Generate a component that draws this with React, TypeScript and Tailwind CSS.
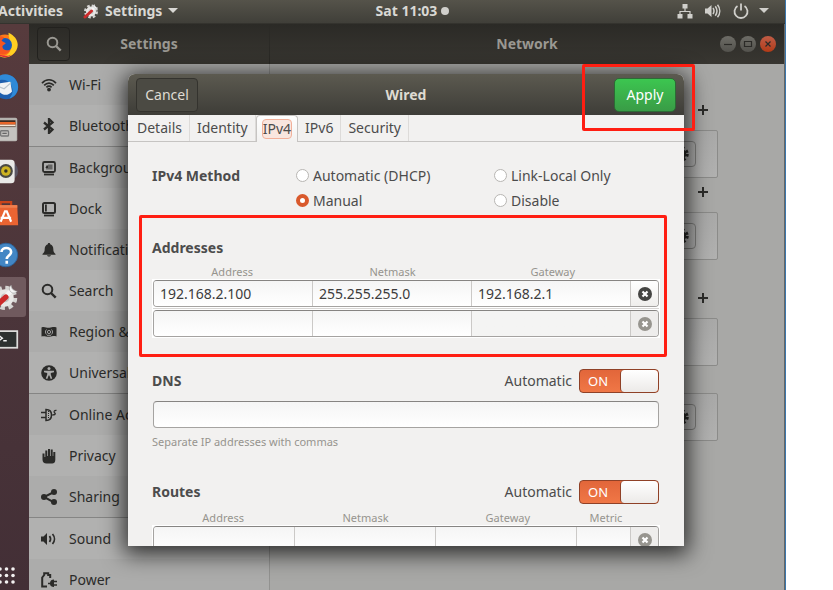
import { type ReactNode } from "react";

type IconName =
  | "wifi" | "bluetooth" | "background" | "dock" | "bell" | "search" | "flag"
  | "access" | "plug" | "hand" | "share" | "sound" | "power";

const glyphs: Record<IconName, ReactNode> = {
  wifi: (
    <g fill="none" stroke="currentColor" strokeWidth="1.7">
      <path d="M1 6.2C5 1.6 11 1.6 15 6.2" />
      <path d="M3.2 8.4c2.8-3 6.8-3 9.6 0" />
      <path d="M5.4 10.4c1.5-1.6 3.7-1.6 5.2 0" />
      <circle cx="8" cy="12.6" r="1.9" fill="currentColor" stroke="none" />
    </g>
  ),
  bluetooth: <path d="M3 4.500l8.500 7L8 15V1l3.500 3.500-8.500 7" fill="none" stroke="currentColor" strokeWidth="2.300" />,
  background: (
    <g>
      <rect x="2" y="2" width="12" height="10" rx="1.5" fill="none" stroke="currentColor" strokeWidth="1.8" />
      <path d="M5 9.500V7h2V4.500h4.500v5z" opacity=".55" fill="currentColor" />
      <path d="M4.500 8l1-2.500h1.500V8z" fill="currentColor" />
      <rect x="3" y="13.600" width="10" height="1.800" fill="currentColor" />
    </g>
  ),
  dock: (
    <g>
      <rect x="2" y="2" width="12" height="10" rx="1.500" fill="none" stroke="currentColor" strokeWidth="2" />
      <rect x="4" y="3.500" width="1.800" height="7" fill="currentColor" />
      <rect x="3" y="13.600" width="10" height="1.800" fill="currentColor" />
    </g>
  ),
  bell: (
    <path
      d="M8 1c.8 0 1.200.6 1.200 1.200C11.500 3 12.300 5 12.300 7c0 2.500.7 3.500 2.200 5v.8h-13V12c1.500-1.500 2.200-2.500 2.200-5 0-2 .8-4 3.100-4.800C6.800 1.600 7.200 1 8 1zM6 13.300h4C9.500 15 6.500 15 6 13.300z"
      fill="currentColor"
    />
  ),
  search: (
    <g fill="none" stroke="currentColor" strokeWidth="2">
      <circle cx="6.500" cy="6.500" r="4.800" />
      <path d="M10 10l4.700 4.700" strokeWidth="2.400" />
    </g>
  ),
  flag: (
    <g>
      <path d="M.5 3.500c3-1.500 5 .8 8 .3 2.500-.4 4-1.300 7-.3v9c-3-1-4.500 0-7 .3-3 .4-5-1.300-8-.3z" fill="currentColor" />
      <g fill="none" stroke="#aaa" strokeWidth=".9">
        <circle cx="8" cy="8" r="1.600" />
        <path d="M5.500 5.500c-1.500 1.500-1.300 3.500 0 5M10.500 5.500c1.500 1.500 1.300 3.500 0 5M6 11.300h4" />
      </g>
    </g>
  ),
  access: (
    <g>
      <circle cx="8" cy="8" r="7.800" fill="currentColor" />
      <circle cx="8" cy="3.600" r="1.500" fill="#adadac" />
      <path d="M3 5.800h10v1.400l-3.200.8v1.500l1.400 4-1.500.5L8.400 10.500h-.8L6.300 14l-1.500-.5 1.400-4V8L3 7.200z" fill="#adadac" />
    </g>
  ),
  plug: (
    <g fill="none" stroke="currentColor" strokeWidth="1.500">
      <path d="M5 2.500c3.500 0 5.500 2 5.500 5.500s-2 5.500-5.500 5.500zM0 5.500h5M0 10.500h5" />
      <path d="M7.500 4v8" strokeDasharray="1 1" strokeWidth="1" />
      <path d="M10.500 8h1c2-.2 3.700-.8 2.300-2-1.500-1.200-.8-2.800 1.700-2.600" strokeWidth="1.200" />
    </g>
  ),
  hand: (
    <path
      d="M1.500 5.500h2V9h.8V2.500h2V8h.7V1h2v7h.7V1.500h2V8h.6V4h2v8c0 2.500-1.500 3.500-3 3.500H5.500c-2.500 0-4-1.500-4-4z"
      fill="currentColor"
    />
  ),
  share: (
    <g fill="currentColor">
      <path d="M13 3L3 8l10 5.300" fill="none" stroke="currentColor" strokeWidth="2" />
      <circle cx="3" cy="8" r="3" />
      <circle cx="13" cy="3" r="3" />
      <circle cx="13" cy="13" r="3" />
    </g>
  ),
  sound: (
    <g>
      <path d="M0 5.500h2.500L6 2v12l-3.500-3.500H0z" fill="currentColor" />
      <path d="M8.500 5c1.300 1.800 1.300 4.200 0 6M11.500 3c2.600 3 2.600 7 0 10" fill="none" stroke="currentColor" strokeWidth="1.700" />
    </g>
  ),
  power: (
    <g>
      <path d="M6 14.600H1.200V5.500l2-2.500V1.200h4V3h2v3" fill="none" stroke="currentColor" strokeWidth="2" />
      <path d="M7 10.700h2c.4-2 1.600-3.200 4-3.200v1.300h3v1.500h-3v1.900h3v1.500h-3V15c-2.400 0-3.600-1-4-2.800H7z" fill="currentColor" />
    </g>
  ),
};

function Glyph({ name, className = "size-4" }: { name: IconName; className?: string }) {
  return (
    <svg viewBox="0 0 16 16" className={`shrink-0 ${className}`} aria-hidden="true">
      {glyphs[name]}
    </svg>
  );
}

function ToolsIcon({ className }: { className: string }) {
  return (
    <svg viewBox="0 0 32 32" className={className} aria-hidden="true">
      <circle cx="16" cy="17" r="11.500" fill="none" stroke="#d6d5d3" strokeWidth="5" strokeDasharray="5 4.030" />
      <circle cx="16" cy="17" r="10" fill="#e8e7e5" />
      <circle cx="16" cy="17" r="5" fill="#c4c2bf" />
      <path d="M14 18L25 7" stroke="#f5f5f5" strokeWidth="5" />
      <path d="M23 2.500a5 5 0 1 0 7 7l-4-1-2-2z" fill="#f5f5f5" stroke="#999" strokeWidth=".6" />
      <path d="M4 28L17 16" stroke="#cc2a2a" strokeWidth="6" strokeLinecap="round" />
    </svg>
  );
}

function Firefox() {
  return (
    <svg viewBox="0 0 32 32" className="size-7" aria-hidden="true">
      <circle cx="16" cy="17" r="13" fill="#ff7a18" />
      <path d="M20 2c9 4 13 12 9 20-4 7-12 10-19 7 9 0 13-5 13-12 0-5-3-8-3-15z" fill="#ffcf22" />
      <circle cx="16" cy="16" r="8" fill="#1858ba" />
      <path d="M3 9c3-3 7-4 12-2l-3 4 5 3-4 3c0 5 5 6 9 4-2 5-8 7-13 5C3 23 1 15 3 9z" fill="#f7561f" />
      <path d="M4 22c4 6 12 8 19 5-4 4-13 5-19-5z" fill="#e2243d" />
    </svg>
  );
}

function Thunderbird() {
  return (
    <svg viewBox="0 0 32 32" className="size-7" aria-hidden="true">
      <circle cx="17" cy="16" r="14" fill="#1f5fae" />
      <path d="M10 3c9-5 21 2 21 13 0 7-5 12-10 13 4-5 5-9 2-15-3-5-7-7-13-6z" fill="#2f8ad8" />
      <path d="M3 13l19-3 2 11c-4 5-10 5-14 1-4-1-7-5-7-9z" fill="#f1f3f5" />
      <path d="M5 14l10 4 8-7" fill="none" stroke="#b9c3cc" strokeWidth="1.300" />
    </svg>
  );
}

function Files() {
  return (
    <svg viewBox="0 0 32 32" className="size-7" aria-hidden="true">
      <rect x="1" y="3" width="29" height="27" rx="2" fill="#b4b2ae" />
      <rect x="3" y="6" width="25" height="8" fill="#3c2a20" />
      <path d="M3 8h25v3H3z" fill="#e8662a" />
      <path d="M3 11h25v2H3z" fill="#f7e6d6" />
      <rect x="2" y="14" width="27" height="15" fill="#c5c3c0" />
      <rect x="11" y="18" width="9" height="6" rx="1" fill="none" stroke="#777" strokeWidth="1.500" />
      <path d="M13 21h5" stroke="#666" strokeWidth="1.500" />
    </svg>
  );
}

function Rhythmbox() {
  return (
    <svg viewBox="0 0 32 32" className="size-7" aria-hidden="true">
      <circle cx="20" cy="16" r="11" fill="#5b5664" />
      <rect x="2" y="3" width="25" height="27" rx="4" fill="#e9e9e7" />
      <circle cx="17" cy="16" r="8" fill="#4a4a44" />
      <circle cx="17" cy="16" r="5.500" fill="#cdb322" />
      <circle cx="17" cy="16" r="2" fill="#33332a" />
    </svg>
  );
}

function Software() {
  return (
    <svg viewBox="0 0 32 32" className="size-7" aria-hidden="true">
      <path d="M11 9V3.500h12V9" fill="none" stroke="#c9441b" strokeWidth="2.500" />
      <path d="M1 7h29l1 23H0z" fill="#ea6432" />
      <path d="M1 7h29v3H1z" fill="#f08050" />
      <path d="M11 26l5-12h2l5 12M11 21.500h12" fill="none" stroke="#fff" strokeWidth="2.500" />
    </svg>
  );
}

function Help() {
  return (
    <svg viewBox="0 0 32 32" className="size-7" aria-hidden="true">
      <circle cx="17" cy="16" r="13.500" fill="#4286c4" stroke="#2b639b" />
      <path d="M12 12.500c0-6 11-6 11 0 0 4-5 4-5 8M18 22.500v3.500" fill="none" stroke="#fff" strokeWidth="3" />
    </svg>
  );
}

function Terminal() {
  return (
    <svg viewBox="0 0 32 32" className="size-7" aria-hidden="true">
      <rect x="0" y="6" width="31" height="21" fill="#dcdcda" />
      <rect x="2" y="8" width="27" height="17" fill="#2d3130" />
      <path d="M9 12l4 3-4 3M14 18h4" fill="none" stroke="#f4f4f4" strokeWidth="1.600" />
    </svg>
  );
}

const dockApps = [
  { name: "Firefox", icon: <Firefox />, active: false },
  { name: "Thunderbird", icon: <Thunderbird />, active: false },
  { name: "Files", icon: <Files />, active: false },
  { name: "Rhythmbox", icon: <Rhythmbox />, active: false },
  { name: "Software", icon: <Software />, active: false },
  { name: "Help", icon: <Help />, active: false },
  { name: "Settings", icon: <ToolsIcon className="size-7" />, active: true },
  { name: "Terminal", icon: <Terminal />, active: false },
];

function Dock() {
  return (
    <nav aria-label="Dock" className="flex w-[29px] shrink-0 flex-col items-end overflow-hidden bg-linear-to-b from-[#573b3d] via-[#4b353a] to-[#432f36] pt-px">
      {dockApps.map((app) => (
        <button
          key={app.name}
          aria-label={app.name}
          className={`mr-[3px] mb-0.5 flex h-10 w-11 shrink-0 items-center justify-end rounded-[3px] pr-[7px] ${app.active ? "bg-[#705a5e]" : ""}`}
        >
          {app.icon}
        </button>
      ))}
      <button aria-label="Show Applications" className="mt-auto mr-3.5 mb-1.5">
        <svg viewBox="0 0 17 17" className="size-[17px]" fill="#f3f1f1" aria-hidden="true">
          {[2, 8.5, 15].map((y) => [2, 8.5, 15].map((x) => <circle key={`${x}-${y}`} cx={x} cy={y} r="1.8" />))}
        </svg>
      </button>
    </nav>
  );
}

function TopBar() {
  return (
    <header className="grid h-6 shrink-0 grid-cols-[1fr_auto_1fr] items-center border-b border-[#34332e] bg-linear-to-b from-[#55534a] to-[#403f39] pb-0.5 text-sm leading-5 font-bold text-[#d9d8d4]">
      <div className="flex items-center gap-5">
        <button className="-ml-0.5">Activities</button>
        <button className="flex items-center gap-1.5">
          <ToolsIcon className="size-4" />
          Settings
          <Caret />
        </button>
      </div>
      <button className="flex items-center gap-1 pl-10">
        Sat 11:03
        <span className="size-2 rounded-full bg-[#d0cfcb]" />
      </button>
      <div className="flex items-center justify-end gap-3 pr-4 text-[#d0cfcb]">
        <svg viewBox="0 0 16 16" className="size-4" fill="currentColor" aria-hidden="true">
          <path d="M5.500 1h5v4.500h-5zM.5 11h5v4.500h-5zM10.500 11h5v4.500h-5z" />
          <path d="M8 5v3.500M3 11V8.500h10V11" fill="none" stroke="currentColor" strokeWidth="1.200" />
        </svg>
        <svg viewBox="0 0 16 16" className="size-4" aria-hidden="true">
          <path d="M0 5.500h2.500L6.500 2v12l-4-3.500H0z" fill="currentColor" />
          <path d="M8 5c1.200 1.800 1.200 4.200 0 6M10.300 3.300c2 2.800 2 6.600 0 9.400M12.500 1.800c3 3.700 3 8.700 0 12.400" fill="none" stroke="currentColor" strokeWidth="1.500" />
        </svg>
        <button aria-label="System menu" className="flex items-center gap-2.5">
          <svg viewBox="0 0 16 16" className="size-4" fill="none" stroke="currentColor" strokeWidth="1.800" aria-hidden="true">
            <path d="M4.500 3a6.500 6.500 0 1 0 7 0M8 .5v7" />
          </svg>
          <Caret />
        </button>
      </div>
    </header>
  );
}

function Caret() {
  return (
    <svg viewBox="0 0 10 5" className="h-[5px] w-2.5" fill="currentColor" aria-hidden="true">
      <path d="M0 0h10L5 5z" />
    </svg>
  );
}

const sections: { label: string; icon: IconName; divider?: boolean }[] = [
  { label: "Wi-Fi", icon: "wifi" },
  { label: "Bluetooth", icon: "bluetooth", divider: true },
  { label: "Background", icon: "background" },
  { label: "Dock", icon: "dock" },
  { label: "Notifications", icon: "bell" },
  { label: "Search", icon: "search" },
  { label: "Region & Language", icon: "flag" },
  { label: "Universal Access", icon: "access", divider: true },
  { label: "Online Accounts", icon: "plug" },
  { label: "Privacy", icon: "hand" },
  { label: "Sharing", icon: "share", divider: true },
  { label: "Sound", icon: "sound" },
  { label: "Power", icon: "power" },
];

function Sidebar() {
  return (
    <ul className="w-[241px] shrink-0 overflow-hidden border-r border-[#929290]">
      {sections.map((s) => (
        <li key={s.label} className={`odd:bg-[#acacab] even:bg-[#b1b1b0] ${s.divider ? "border-b border-[#858584]" : ""}`}>
          <button className="flex h-[41px] w-full items-center gap-3 pl-3 text-left text-[#2b2b29]">
            <Glyph name={s.icon} />
            {s.label}
          </button>
        </li>
      ))}
    </ul>
  );
}

function AddButton() {
  return (
    <button aria-label="Add" className="mr-2 flex h-5 w-3.5 items-center text-[#2b2b29]">
      <svg viewBox="0 0 14 14" className="size-3.5" stroke="currentColor" strokeWidth="2" aria-hidden="true">
        <path d="M7 2v10M2 7h10" />
      </svg>
    </button>
  );
}

function DeviceCard({ gear = true }: { gear?: boolean }) {
  return (
    <div className="flex h-12 w-full items-center justify-end rounded-xs border border-[#8b8b89] bg-linear-to-b from-[#a9a9a8] to-[#b1b1b0] pr-[21px]">
      {gear && (
        <button aria-label="Options" className="flex h-[26px] w-[30px] items-center justify-center rounded-[4px] border border-[#7c7c7a] text-[#2b2b29]">
          <svg viewBox="0 0 16 16" className="size-4" aria-hidden="true">
            <circle cx="8" cy="8" r="6" fill="none" stroke="currentColor" strokeWidth="3.500" strokeDasharray="2.500 2.210" />
            <circle cx="8" cy="8" r="4" fill="none" stroke="currentColor" strokeWidth="2.500" />
          </svg>
        </button>
      )}
    </div>
  );
}

function NetworkPane() {
  return (
    <main className="flex flex-1 flex-col items-end bg-[#a8a8a6] px-[66px] pt-9">
      <AddButton />
      <div className="mt-2.5 w-full"><DeviceCard /></div>
      <div className="mt-1"><AddButton /></div>
      <div className="mt-2.5 w-full"><DeviceCard /></div>
      <div className="mt-7"><AddButton /></div>
      <div className="mt-2.5 w-full"><DeviceCard gear={false} /></div>
      <div className="mt-[27px] w-full"><DeviceCard /></div>
    </main>
  );
}

function WindowButton({ label, close, children }: { label: string; close?: boolean; children: ReactNode }) {
  return (
    <button
      aria-label={label}
      className={`flex size-4 items-center justify-center rounded-full text-[#2b2a27] ${close ? "bg-linear-to-b from-[#c05c45] to-[#b23a15]" : "bg-linear-to-b from-[#6d6c66] to-[#53524d]"}`}
    >
      <svg viewBox="0 0 16 16" className="size-4" fill="none" stroke="currentColor" strokeWidth="1.200" aria-hidden="true">
        {children}
      </svg>
    </button>
  );
}

function WindowHeader() {
  return (
    <header className="flex h-10 shrink-0 bg-linear-to-b from-[#2b2a26] to-[#383631] font-bold text-[#9a9892]">
      <div className="grid w-[241px] shrink-0 grid-cols-[1fr_auto_1fr] items-center border-r border-[#2b2a26] px-2">
        <button aria-label="Search" className="flex h-[34px] w-[33px] items-center justify-center rounded-[4px] border border-[#22211e]">
          <Glyph name="search" />
        </button>
        <h1>Settings</h1>
      </div>
      <div className="grid flex-1 grid-cols-[1fr_auto_1fr] items-center px-2">
        <h2 className="col-start-2">Network</h2>
        <div className="flex justify-end gap-1">
          <WindowButton label="Minimize"><path d="M4 8.500h8" /></WindowButton>
          <WindowButton label="Maximize"><path d="M4.500 5.500h7v5h-7z" /></WindowButton>
          <WindowButton label="Close" close><path d="M5.500 5.500l5 5M10.500 5.500l-5 5" /></WindowButton>
        </div>
      </div>
    </header>
  );
}

const tabs = ["Details", "Identity", "IPv4", "IPv6", "Security"];

function Tabs() {
  return (
    <div role="tablist" className="flex h-[27px] shrink-0 border-b border-[#c6c4c2] pl-0.5">
      {tabs.map((tab) =>
        tab === "IPv4" ? (
          <button
            key={tab}
            role="tab"
            aria-selected="true"
            className="-mb-px flex items-center rounded-t-[4px] border border-b-0 border-[#c6c4c2] bg-linear-to-b from-white to-[#f2f1f0] px-1.5"
          >
            <span className="-mx-px rounded-[4px] border border-[#f2b09a] bg-[#f9e6df] leading-[18px]">{tab}</span>
          </button>
        ) : (
          <button key={tab} role="tab" aria-selected="false" className="border-r border-[#dddbd9] px-[7px]">
            {tab}
          </button>
        ),
      )}
    </div>
  );
}

function Method({ label, checked }: { label: string; checked?: boolean }) {
  return (
    <label className="flex h-[25px] items-center gap-1">
      <input
        type="radio"
        name="ipv4-method"
        defaultChecked={checked}
        className="size-[13px] appearance-none rounded-full border border-[#b8b6b3] bg-white checked:border-4 checked:border-[#d9592c]"
      />
      {label}
    </label>
  );
}

function AutoSwitch({ id, title }: { id: string; title: string }) {
  return (
    <div className="mr-px flex h-6 items-center">
      <h3 className="flex-1 font-bold">{title}</h3>
      <label htmlFor={id} className="mr-[7px]">Automatic</label>
      <span className="relative flex h-6 w-20 items-center rounded-[4px] border border-[#8f4127] bg-linear-to-b from-[#e2663a] to-[#f07746] pl-2 text-[13px] text-white">
        <input id={id} type="checkbox" role="switch" defaultChecked className="absolute inset-0 size-full appearance-none" />
        ON
        <span className="ml-auto h-full w-[38px] rounded-[4px] border-l border-[#8f4127] bg-linear-to-b from-white to-[#eceae8]" />
      </span>
    </div>
  );
}

function RemoveButton({ enabled }: { enabled?: boolean }) {
  return (
    <button
      aria-label="Remove"
      disabled={!enabled}
      className={`flex items-center justify-center ${enabled ? "bg-linear-to-b from-white to-[#efeeec] text-[#454543]" : "bg-[#eeedec] text-[#97958f]"}`}
    >
      <svg viewBox="0 0 14 14" className="size-3.5" aria-hidden="true">
        <circle cx="7" cy="7" r="7" fill="currentColor" />
        <path d="M4.500 4.500l5 5M9.500 4.500l-5 5" stroke="#fff" strokeWidth="2.200" />
      </svg>
    </button>
  );
}

function EntryRow({ columns, names, values, insensitive }: { columns: string; names: string[]; values?: string[]; insensitive?: number }) {
  return (
    <div className={`grid h-[27px] divide-x divide-[#cbc9c7] overflow-hidden rounded-[4px] border border-[#a5a3a1] border-t-[#868482] ${columns}`}>
      {names.map((name, i) => (
        <input
          key={name}
          aria-label={name}
          defaultValue={values?.[i]}
          disabled={insensitive === i}
          className="w-full min-w-0 bg-linear-to-b from-[#f5f5f5] to-white px-1.5 text-[#3c3c3c] outline-none disabled:from-[#f4f4f3] disabled:to-[#f4f4f3]"
        />
      ))}
      <RemoveButton enabled={!!values} />
    </div>
  );
}

function ColumnLabels({ columns, names }: { columns: string; names: string[] }) {
  return (
    <div className={`grid text-center text-[11px] leading-[15px] text-[#96948e] ${columns}`}>
      {names.map((n) => <span key={n}>{n}</span>)}
    </div>
  );
}

const addressColumns = "grid-cols-[1fr_1fr_1fr_27px]";
const addressNames = ["Address", "Netmask", "Gateway"];
const routeColumns = "grid-cols-[1fr_1fr_1fr_54px_27px]";
const routeNames = ["Address", "Netmask", "Gateway", "Metric"];

function WiredDialog() {
  return (
    <section role="dialog" aria-label="Wired" className="flex h-[472px] w-[556px] flex-col overflow-hidden rounded-t-[7px] bg-[#f2f1f0] text-[#4c4c4c] shadow-[0_4px_22px_4px_rgba(0,0,0,0.75)]">
      <header className="grid h-[41px] shrink-0 grid-cols-[1fr_auto_1fr] items-center bg-linear-to-b from-[#5c5a50] to-[#3e3d38] px-2 text-[#dfdbd2]">
        <button className="h-[34px] w-[62px] justify-self-start rounded-[4px] border border-[#34332e] bg-[#4b4a43]">Cancel</button>
        <h2 className="font-bold">Wired</h2>
        <button className="h-[34px] w-[62px] justify-self-end rounded-[5px] border border-[#2c6b35] bg-linear-to-b from-[#3cc650] to-[#399c46] text-white">Apply</button>
      </header>
      <Tabs />
      <div className="flex flex-col px-6 pt-[21px]">
        <fieldset aria-labelledby="method-title" className="grid grid-cols-[144px_198px_1fr]">
          <h3 id="method-title" className="row-span-2 leading-[25px] font-bold">IPv4 Method</h3>
          <Method label="Automatic (DHCP)" />
          <Method label="Link-Local Only" />
          <Method label="Manual" checked />
          <Method label="Disable" />
        </fieldset>
        <h3 className="mt-[23px] mb-1 leading-6 font-bold">Addresses</h3>
        <ColumnLabels columns={addressColumns} names={addressNames} />
        <div className="bg-white p-px">
          <EntryRow columns={addressColumns} names={addressNames} values={["192.168.2.100", "255.255.255.0", "192.168.2.1"]} />
          <div className="my-px h-px bg-[#d8d6d4]" />
          <EntryRow columns={addressColumns} names={addressNames} insensitive={2} />
        </div>
        <div className="mt-[31px]"><AutoSwitch id="dns-auto" title="DNS" /></div>
        <input
          aria-label="DNS servers"
          className="mx-px mt-2 h-[27px] rounded-[4px] border border-[#a5a3a1] border-t-[#868482] bg-linear-to-b from-[#f5f5f5] to-white px-[7px] outline-none"
        />
        <p className="mt-1 text-[11px] leading-5 text-[#96948e]">Separate IP addresses with commas</p>
        <div className="mt-7 mb-1.5"><AutoSwitch id="routes-auto" title="Routes" /></div>
        <ColumnLabels columns={routeColumns} names={routeNames} />
        <div className="bg-white p-px">
          <EntryRow columns={routeColumns} names={routeNames} />
        </div>
      </div>
    </section>
  );
}

export default function App() {
  return (
    <div className="h-screen overflow-hidden bg-white pr-[47px] font-['Noto_Sans',sans-serif] text-sm leading-5">
      <div className="relative flex h-full flex-col border-r border-[#3b77ad]">
        <TopBar />
        <div className="flex min-h-0 flex-1">
          <Dock />
          <div className="relative flex min-w-0 flex-1 flex-col overflow-hidden border-r border-[#666664]">
            <WindowHeader />
            <div className="flex min-h-0 flex-1">
              <Sidebar />
              <NetworkPane />
            </div>
            <div className="absolute inset-0 flex items-start justify-center pt-[50px] pr-px">
              <WiredDialog />
            </div>
          </div>
        </div>
        <div className="pointer-events-none absolute top-16 left-[582px] h-[67px] w-[113px] rounded-xs border-3 border-[#ff1e12]" />
        <div className="pointer-events-none absolute top-[215px] left-[139px] h-[142px] w-[528px] rounded-xs border-3 border-[#ff1e12]" />
      </div>
    </div>
  );
}
